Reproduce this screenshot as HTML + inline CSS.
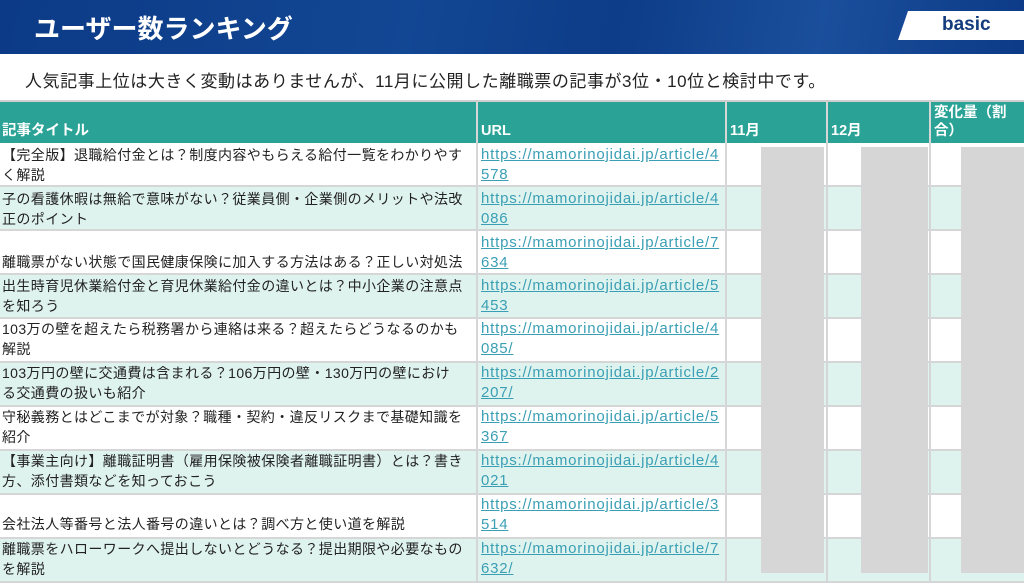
<!DOCTYPE html>
<html><head><meta charset="utf-8"><style>
*{margin:0;padding:0;box-sizing:border-box}
body{width:1024px;height:573px;overflow:hidden;background:#fff;font-family:"Liberation Sans","Noto Sans CJK JP",sans-serif;position:relative}
.top{position:absolute;left:0;top:0;width:1024px;height:54px;background:linear-gradient(100deg,#0c3a86 0%,#124794 40%,#0d3c88 60%,#1a4f9c 80%,#0c3a86 100%)}
.top h1{position:absolute;left:34px;top:9px;color:#fff;font-size:26px;font-weight:bold}
.tab{position:absolute;left:898px;top:11px;width:126px;height:29px;background:#fff;clip-path:polygon(10px 0,100% 0,100% 100%,0 100%)}
.tab span{position:absolute;left:44px;top:3px;font-size:19px;font-weight:bold;color:#143c7c}
.sub{position:absolute;left:25px;top:67px;font-size:17px;letter-spacing:0.55px;color:#222}
.row{position:absolute;left:0;width:1024px;border-bottom:2px solid #d6d6d6}
.c{position:absolute;top:0;bottom:0;border-right:2px solid #d6d6d6}
.t{position:absolute;font-size:14px;letter-spacing:0.4px;line-height:20px;color:#222;white-space:nowrap}
.u{position:absolute;left:481px;font-size:15px;letter-spacing:0.8px;line-height:20px;color:#3a9fb5;text-decoration:underline;font-family:"Liberation Sans",sans-serif;white-space:nowrap}
.hd{position:absolute;left:0;top:100px;width:1024px;height:43px;background:#2aa396;border-top:2px solid #cfcfcf}
.hd div{position:absolute;color:#fff;font-weight:bold;font-size:14.5px;line-height:18px}
.hd i{position:absolute;top:0;bottom:0;width:2px;background:#d6d6d6}
.g{position:absolute;top:147px;height:426px;background:#d6d6d6}
</style></head><body>
<div class="top"><h1>ユーザー数ランキング</h1><div class="tab"><span>basic</span></div></div>
<div class="sub">人気記事上位は大きく変動はありませんが、11月に公開した離職票の記事が3位・10位と検討中です。</div>
<div class="hd">
<div style="left:2px;top:20px">記事タイトル</div>
<div style="left:481px;top:20px">URL</div>
<div style="left:730px;top:20px">11月</div>
<div style="left:831px;top:20px">12月</div>
<div style="left:934px;top:2px;width:90px">変化量（割<br>合）</div>
<i style="left:476px"></i><i style="left:725px"></i><i style="left:826px"></i><i style="left:929px"></i>
</div>
<div class="row" style="top:143px;height:44px;background:#fff"><div class="c" style="left:0;width:478px"></div><div class="c" style="left:478px;width:249px"></div><div class="c" style="left:727px;width:101px"></div><div class="c" style="left:828px;width:103px"></div>
<div class="t" style="left:2px;top:2px">【完全版】退職給付金とは？制度内容やもらえる給付一覧をわかりやす<br>く解説</div><div class="u" style="top:2px">https://mamorinojidai.jp/article/4<br>578</div></div>
<div class="row" style="top:187px;height:44px;background:#dff3ee"><div class="c" style="left:0;width:478px"></div><div class="c" style="left:478px;width:249px"></div><div class="c" style="left:727px;width:101px"></div><div class="c" style="left:828px;width:103px"></div>
<div class="t" style="left:2px;top:2px">子の看護休暇は無給で意味がない？従業員側・企業側のメリットや法改<br>正のポイント</div><div class="u" style="top:2px">https://mamorinojidai.jp/article/4<br>086</div></div>
<div class="row" style="top:231px;height:44px;background:#fff"><div class="c" style="left:0;width:478px"></div><div class="c" style="left:478px;width:249px"></div><div class="c" style="left:727px;width:101px"></div><div class="c" style="left:828px;width:103px"></div>
<div class="t" style="left:2px;top:21px">離職票がない状態で国民健康保険に加入する方法はある？正しい対処法</div><div class="u" style="top:2px">https://mamorinojidai.jp/article/7<br>634</div></div>
<div class="row" style="top:275px;height:44px;background:#dff3ee"><div class="c" style="left:0;width:478px"></div><div class="c" style="left:478px;width:249px"></div><div class="c" style="left:727px;width:101px"></div><div class="c" style="left:828px;width:103px"></div>
<div class="t" style="left:2px;top:1px">出生時育児休業給付金と育児休業給付金の違いとは？中小企業の注意点<br>を知ろう</div><div class="u" style="top:1px">https://mamorinojidai.jp/article/5<br>453</div></div>
<div class="row" style="top:319px;height:44px;background:#fff"><div class="c" style="left:0;width:478px"></div><div class="c" style="left:478px;width:249px"></div><div class="c" style="left:727px;width:101px"></div><div class="c" style="left:828px;width:103px"></div>
<div class="t" style="left:2px;top:0px">103万の壁を超えたら税務署から連絡は来る？超えたらどうなるのかも<br>解説</div><div class="u" style="top:0px">https://mamorinojidai.jp/article/4<br>085/</div></div>
<div class="row" style="top:363px;height:44px;background:#dff3ee"><div class="c" style="left:0;width:478px"></div><div class="c" style="left:478px;width:249px"></div><div class="c" style="left:727px;width:101px"></div><div class="c" style="left:828px;width:103px"></div>
<div class="t" style="left:2px;top:0px">103万円の壁に交通費は含まれる？106万円の壁・130万円の壁におけ<br>る交通費の扱いも紹介</div><div class="u" style="top:0px">https://mamorinojidai.jp/article/2<br>207/</div></div>
<div class="row" style="top:407px;height:44px;background:#fff"><div class="c" style="left:0;width:478px"></div><div class="c" style="left:478px;width:249px"></div><div class="c" style="left:727px;width:101px"></div><div class="c" style="left:828px;width:103px"></div>
<div class="t" style="left:2px;top:0px">守秘義務とはどこまでが対象？職種・契約・違反リスクまで基礎知識を<br>紹介</div><div class="u" style="top:0px">https://mamorinojidai.jp/article/5<br>367</div></div>
<div class="row" style="top:451px;height:44px;background:#dff3ee"><div class="c" style="left:0;width:478px"></div><div class="c" style="left:478px;width:249px"></div><div class="c" style="left:727px;width:101px"></div><div class="c" style="left:828px;width:103px"></div>
<div class="t" style="left:2px;top:0px">【事業主向け】離職証明書（雇用保険被保険者離職証明書）とは？書き<br>方、添付書類などを知っておこう</div><div class="u" style="top:0px">https://mamorinojidai.jp/article/4<br>021</div></div>
<div class="row" style="top:495px;height:44px;background:#fff"><div class="c" style="left:0;width:478px"></div><div class="c" style="left:478px;width:249px"></div><div class="c" style="left:727px;width:101px"></div><div class="c" style="left:828px;width:103px"></div>
<div class="t" style="left:2px;top:19px">会社法人等番号と法人番号の違いとは？調べ方と使い道を解説</div><div class="u" style="top:0px">https://mamorinojidai.jp/article/3<br>514</div></div>
<div class="row" style="top:539px;height:44px;background:#dff3ee"><div class="c" style="left:0;width:478px"></div><div class="c" style="left:478px;width:249px"></div><div class="c" style="left:727px;width:101px"></div><div class="c" style="left:828px;width:103px"></div>
<div class="t" style="left:2px;top:0px">離職票をハローワークへ提出しないとどうなる？提出期限や必要なもの<br>を解説</div><div class="u" style="top:0px">https://mamorinojidai.jp/article/7<br>632/</div></div>
<div class="g" style="left:761px;width:63px"></div>
<div class="g" style="left:861px;width:67px"></div>
<div class="g" style="left:961px;width:63px"></div>
</body></html>
